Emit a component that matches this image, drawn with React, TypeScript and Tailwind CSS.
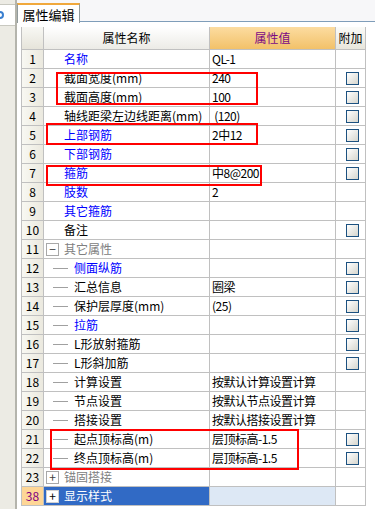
import type { ReactNode } from 'react'

type Kind = 'plain' | 'child' | 'group'

interface Row {
  no: string
  name: string
  value?: string
  color?: 'blue' | 'black' | 'gray'
  kind?: Kind
  sign?: '+' | '−'
  check?: boolean
}

const rows: Row[] = [
  { no: '1', name: '名称', value: 'QL-1', color: 'blue' },
  { no: '2', name: '截面宽度(mm)', value: '240', check: true },
  { no: '3', name: '截面高度(mm)', value: '100', check: true },
  { no: '4', name: '轴线距梁左边线距离(mm)', value: ' (120)', check: true },
  { no: '5', name: '上部钢筋', value: '2中12', color: 'blue', check: true },
  { no: '6', name: '下部钢筋', color: 'blue', check: true },
  { no: '7', name: '箍筋', value: '中8@200', color: 'blue', check: true },
  { no: '8', name: '肢数', value: '2', color: 'blue' },
  { no: '9', name: '其它箍筋', color: 'blue' },
  { no: '10', name: '备注', check: true },
  { no: '11', name: '其它属性', color: 'gray', kind: 'group', sign: '−' },
  { no: '12', name: '侧面纵筋', color: 'blue', kind: 'child', check: true },
  { no: '13', name: '汇总信息', value: '圈梁', kind: 'child', check: true },
  { no: '14', name: '保护层厚度(mm)', value: '(25)', kind: 'child', check: true },
  { no: '15', name: '拉筋', color: 'blue', kind: 'child', check: true },
  { no: '16', name: 'L形放射箍筋', kind: 'child', check: true },
  { no: '17', name: 'L形斜加筋', kind: 'child', check: true },
  { no: '18', name: '计算设置', value: '按默认计算设置计算', kind: 'child' },
  { no: '19', name: '节点设置', value: '按默认节点设置计算', kind: 'child' },
  { no: '20', name: '搭接设置', value: '按默认搭接设置计算', kind: 'child' },
  { no: '21', name: '起点顶标高(m)', value: '层顶标高-1.5', kind: 'child', check: true },
  { no: '22', name: '终点顶标高(m)', value: '层顶标高-1.5', kind: 'child', check: true },
  { no: '23', name: '锚固搭接', color: 'gray', kind: 'group', sign: '+' },
]

const font = { fontFamily: '"Noto Sans CJK SC", "DejaVu Sans", sans-serif' }

function Checkbox() {
  return (
    <div className="h-[13px] w-[13px] border border-[#1c5180] bg-gradient-to-br from-white to-[#d6d6ce]" />
  )
}

function SignBox({ sign, selected }: { sign: string; selected?: boolean }) {
  return (
    <div
      className={
        'flex h-[13px] w-[13px] items-center justify-center border text-[12px] leading-none ' +
        (selected ? 'border-[#d0d0d0] bg-white text-black' : 'border-[#a8a8a8] bg-white text-[#404040]')
      }
    >
      {sign}
    </div>
  )
}

// red annotation frames drawn over the grid
function RedBox({ className }: { className: string }) {
  return <div className={'pointer-events-none absolute border-2 border-[#ff0000] ' + className} />
}

function Cell({ className, children }: { className: string; children?: ReactNode }) {
  return <div className={'flex h-full items-center border-r border-[#c0c0c0] ' + className}>{children}</div>
}

export default function App() {
  return (
    <div className="flex h-[509px] w-[375px] overflow-hidden bg-white text-[12px] text-black" style={font}>
      {/* left dock strip */}
      <div className="flex w-[17px] shrink-0 flex-col border-r-2 border-[#b4b4ac] bg-[#ecebe4]">
        <div className="mt-[4px] flex h-[22px] items-center border-y border-[#c8c8c0] bg-white">
          <div className="ml-[-4px] h-[8px] w-[8px] rounded-full border-2 border-[#3a7fd0]" />
        </div>
      </div>

      <div className="flex min-w-0 flex-1 flex-col">
        {/* tab strip */}
        <div className="flex h-[23px] shrink-0 items-end bg-[#f7f7f9]">
          <div className="relative flex h-[20px] w-[63px] items-center justify-center border-x border-t-2 border-[#919b9c] border-t-[#f0a83c] bg-white text-[13px] leading-none">
            属性编辑
          </div>
          <div className="h-[2px] flex-1 border-t border-[#7f9db9] bg-white" />
        </div>

        {/* property grid */}
        <div className="relative ml-[4px] mt-[4px] w-[345px] border-l border-[#c0c0c0]">
          <div className="flex h-[23px] border-b border-[#c0c0c0] text-[12px]">
            <Cell className="w-[22px] bg-gradient-to-b from-[#f8f8f4] to-[#e6e4da]" />
            <Cell className="w-[166px] justify-center bg-gradient-to-b from-white to-[#ecebe6]">属性名称</Cell>
            <Cell className="w-[126px] justify-center bg-gradient-to-b from-[#fcdca0] to-[#f2c168] text-[#7b0a84]">属性值</Cell>
            <Cell className="w-[30px] justify-center bg-gradient-to-b from-[#fbfbf8] to-[#e8e6dc]">附加</Cell>
          </div>

          {rows.map((r) => {
            const color =
              r.color === 'blue' ? 'text-[#0000ff]' : r.color === 'gray' ? 'text-[#808080]' : 'text-black'
            return (
              <div key={r.no} className="flex h-[19px] border-b border-[#c0c0c0]">
                <Cell className="w-[22px] justify-center bg-gradient-to-r from-[#f8f8f2] to-[#ebe9df]">{r.no}</Cell>
                <Cell className={'w-[166px] whitespace-nowrap overflow-hidden ' + color}>
                  {r.kind === 'group' && (
                    <div className="ml-[2px] mr-[5px]">
                      <SignBox sign={r.sign ?? '+'} />
                    </div>
                  )}
                  {r.kind === 'child' && <div className="ml-[9px] mr-[6px] h-px w-[15px] bg-[#a0a0a0]" />}
                  {!r.kind && <div className="w-[20px] shrink-0" />}
                  <span>{r.name}</span>
                </Cell>
                <Cell className="w-[126px] whitespace-pre pl-[2px] tracking-[-0.5px]">{r.value}</Cell>
                <Cell className="w-[30px] pl-[10px]">{r.check && <Checkbox />}</Cell>
              </div>
            )
          })}

          <div className="flex h-[19px] border-b border-[#c0c0c0]">
            <Cell className="w-[22px] justify-center bg-[#fed696] text-[#800080]">38</Cell>
            <Cell className="w-[166px] bg-[#316ac5] text-white">
              <div className="ml-[2px] mr-[5px]">
                <SignBox sign="+" selected />
              </div>
              <span>显示样式</span>
            </Cell>
            <Cell className="w-[126px] bg-[#dde8f5]" />
            <Cell className="w-[30px]" />
          </div>

          <RedBox className="left-[34px] top-[45px] h-[33px] w-[202px]" />
          <RedBox className="left-[24px] top-[96px] h-[22px] w-[212px]" />
          <RedBox className="left-[24px] top-[138px] h-[21px] w-[216px]" />
          <RedBox className="left-[28px] top-[402px] h-[41px] w-[249px]" />
        </div>
      </div>
    </div>
  )
}
